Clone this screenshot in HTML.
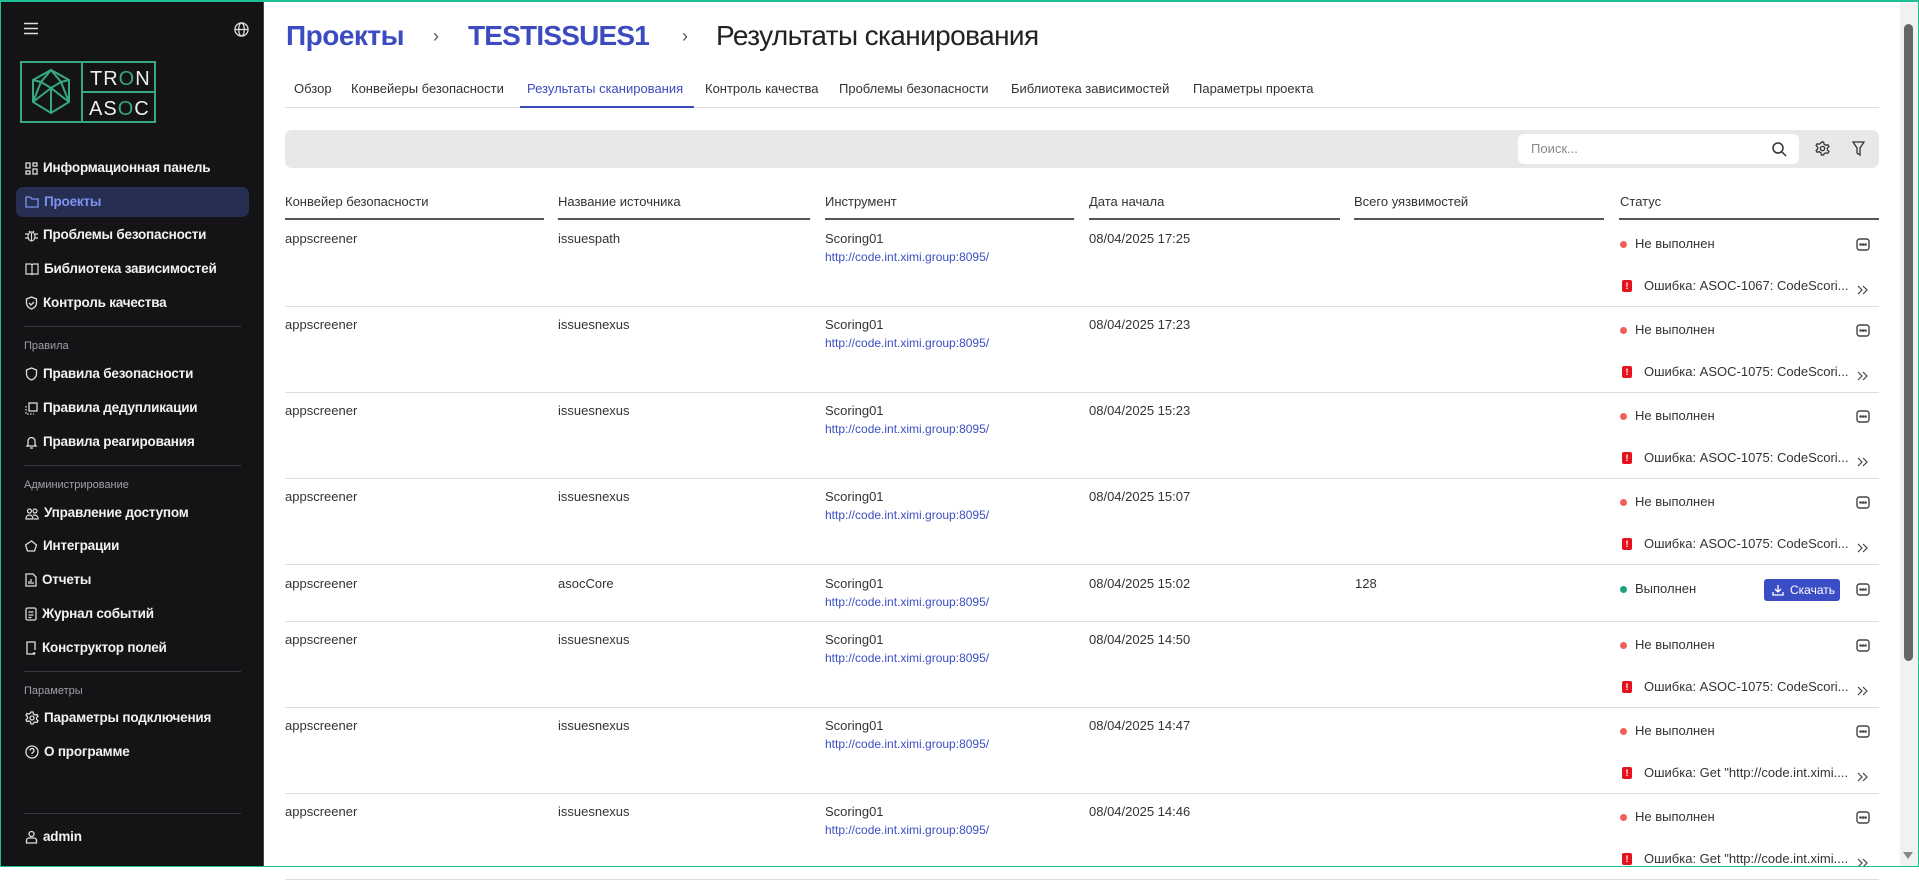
<!DOCTYPE html>
<html><head><meta charset="utf-8">
<style>
*{box-sizing:border-box;margin:0;padding:0}
html,body{width:1919px;height:867px;overflow:hidden;background:#fff;font-family:"Liberation Sans",sans-serif;}
#frame{position:absolute;left:0;top:0;width:1919px;height:867px;border:1px solid #1fbf96;border-top-width:2px;pointer-events:none;z-index:10}
#side{position:absolute;left:0;top:0;width:264px;height:867px;background:#141416;border-right:1px solid #444;}
.ab{position:absolute;white-space:nowrap}
.mi{position:absolute;left:25px;color:#f2f2f2;font-size:13.5px;font-weight:bold;letter-spacing:-0.2px;height:20px;line-height:20px;display:flex;align-items:center}
.mi svg{margin-right:5px;flex:none}
.lbl{position:absolute;left:24px;color:#a0a0a6;font-size:11px}
.div{position:absolute;left:24px;width:217px;height:1px;background:#3a3a3e}
.t{position:absolute;white-space:nowrap;font-size:13px;color:#333;line-height:16px}
.lnk{color:#3b4fc2;font-size:12px}
.th{position:absolute;top:194px;font-size:13px;color:#333}
.hl{position:absolute;top:218px;height:2px;background:#555}
.sep{position:absolute;left:285px;width:1594px;height:1px;background:#ddd}
.dot{position:absolute;width:7px;height:7px;border-radius:50%}
.err{position:absolute;width:10px;height:12px;background:#e5121c;border-radius:2px;color:#fff;font-size:9px;font-weight:bold;text-align:center;line-height:12px}
</style></head><body>
<div id="side">
  <svg class="ab" style="left:24px;top:22px" width="14" height="13" viewBox="0 0 14 13"><path d="M0 1.5h14M0 6.5h14M0 11.5h14" stroke="#ddd" stroke-width="1.6"/></svg>
  <svg class="ab" style="left:234px;top:22px" width="15" height="15" viewBox="0 0 16 16" fill="none" stroke="#ddd" stroke-width="1.4"><circle cx="8" cy="8" r="7"/><ellipse cx="8" cy="8" rx="3" ry="7"/><path d="M1 8h14"/></svg>
  <svg class="ab" style="left:20px;top:61px" width="137" height="63" viewBox="0 0 137 63">
    <g fill="none" stroke="#36a884" stroke-width="2">
      <rect x="1" y="1" width="134" height="60"/><path d="M62 1v60M62 31h73"/>
      <path d="M31 9l18 10v22l-18 11l-18-11V19z"/>
      <path d="M31 9l-10 12l10 6l10-6z M13 19l8 2M49 19l-8 2M31 27v25M13 41l18-14l18 14M21 21l-8 20M41 21l8 20"/>
    </g>
    <text x="70" y="24" font-family="Liberation Sans" font-size="20" fill="#eee" letter-spacing="1">TR<tspan fill="#36a884">O</tspan>N</text>
    <text x="69" y="54" font-family="Liberation Sans" font-size="20" fill="#eee" letter-spacing="1">AS<tspan fill="#36a884">O</tspan>C</text>
  </svg>
  <div class="ab" style="left:16px;top:187px;width:233px;height:30px;background:#262e52;border-radius:7px"></div>
  <div class="mi" style="top:158px"><svg width="13" height="13" viewBox="0 0 13 13" fill="none" stroke="#ddd" stroke-width="1.3"><rect x="1" y="1" width="4" height="5"/><rect x="8" y="1" width="4" height="3"/><rect x="1" y="9" width="4" height="3"/><rect x="8" y="7" width="4" height="5"/></svg>Информационная панель</div>
  <div class="mi" style="top:192px;color:#7d93f0"><svg width="14" height="12" viewBox="0 0 14 12" fill="none" stroke="#7d93f0" stroke-width="1.3"><path d="M1 1h4l2 2h6v8H1z"/></svg>Проекты</div>
  <div class="mi" style="top:225px"><svg width="13" height="13" viewBox="0 0 13 13" fill="none" stroke="#ddd" stroke-width="1.2"><ellipse cx="6.5" cy="7.5" rx="3.5" ry="4.5"/><path d="M0 5h3M10 5h3M0 9h3M10 9h3M4 2l1 1M9 2l-1 1M6.5 4v8"/></svg>Проблемы безопасности</div>
  <div class="mi" style="top:259px"><svg width="14" height="12" viewBox="0 0 14 12" fill="none" stroke="#ddd" stroke-width="1.2"><path d="M1 1h5l1 1l1-1h5v10H8l-1 1l-1-1H1zM7 2v9"/></svg>Библиотека зависимостей</div>
  <div class="mi" style="top:293px"><svg width="13" height="14" viewBox="0 0 13 14" fill="none" stroke="#ddd" stroke-width="1.3"><path d="M6.5 1l5 2v4c0 3-2.5 5-5 6c-2.5-1-5-3-5-6V3z M4 7l2 2l3-3"/></svg>Контроль качества</div>
  <div class="div" style="top:326px"></div>
  <div class="lbl" style="top:340px">Правила</div>
  <div class="mi" style="top:364px"><svg width="13" height="14" viewBox="0 0 13 14" fill="none" stroke="#ddd" stroke-width="1.3"><path d="M6.5 1l5 2v4c0 3-2.5 5-5 6c-2.5-1-5-3-5-6V3z"/></svg>Правила безопасности</div>
  <div class="mi" style="top:398px"><svg width="13" height="13" viewBox="0 0 13 13" fill="none" stroke="#ddd" stroke-width="1.3"><rect x="4" y="1" width="8" height="8"/><path d="M1 4v8h8" stroke-dasharray="1.5 1.5"/></svg>Правила дедупликации</div>
  <div class="mi" style="top:432px"><svg width="13" height="14" viewBox="0 0 13 14" fill="none" stroke="#ddd" stroke-width="1.3"><path d="M3 10V6a3.5 3.5 0 0 1 7 0v4l1 1H2zM5 13h3"/></svg>Правила реагирования</div>
  <div class="div" style="top:465px"></div>
  <div class="lbl" style="top:479px">Администрирование</div>
  <div class="mi" style="top:503px"><svg width="14" height="13" viewBox="0 0 14 13" fill="none" stroke="#ddd" stroke-width="1.2"><circle cx="4.5" cy="4" r="2"/><circle cx="10" cy="4" r="2"/><path d="M1 12c0-3 2-4 3.5-4s3.5 1 3.5 4zM8 8c2 0 5 0 5 4H9"/></svg>Управление доступом</div>
  <div class="mi" style="top:536px"><svg width="13" height="13" viewBox="0 0 13 13" fill="none" stroke="#ddd" stroke-width="1.3"><path d="M6.5 1l5 4l-2 6h-7l-2-6z"/></svg>Интеграции</div>
  <div class="mi" style="top:570px"><svg width="12" height="14" viewBox="0 0 12 14" fill="none" stroke="#ddd" stroke-width="1.3"><path d="M1 1h7l3 3v9H1zM4 11V8M6 11V6M8 11V9"/></svg>Отчеты</div>
  <div class="mi" style="top:604px"><svg width="12" height="14" viewBox="0 0 12 14" fill="none" stroke="#ddd" stroke-width="1.3"><rect x="1" y="1" width="10" height="12" rx="1.5"/><path d="M3.5 5h5M3.5 8h5M3.5 10.5h3"/></svg>Журнал событий</div>
  <div class="mi" style="top:638px"><svg width="12" height="14" viewBox="0 0 12 14" fill="none" stroke="#ddd" stroke-width="1.3"><path d="M8 13H2V1h8v8M9 11v3M7.5 12.5h3"/></svg>Конструктор полей</div>
  <div class="div" style="top:671px"></div>
  <div class="lbl" style="top:685px">Параметры</div>
  <div class="mi" style="top:708px"><svg width="14" height="14" viewBox="0 0 14 14" fill="none" stroke="#ddd" stroke-width="1.3"><circle cx="7" cy="7" r="2"/><path d="M6 1h2l.5 2l1.5 1l2-.5l1 1.7l-1.5 1.5v1.6l1.5 1.5l-1 1.7l-2-.5l-1.5 1L8 13H6l-.5-2L4 10l-2 .5l-1-1.7l1.5-1.5V5.7L1 4.2l1-1.7l2 .5l1.5-1z"/></svg>Параметры подключения</div>
  <div class="mi" style="top:742px"><svg width="14" height="14" viewBox="0 0 14 14" fill="none" stroke="#ddd" stroke-width="1.3"><circle cx="7" cy="7" r="6"/><path d="M5 5.5a2 2 0 1 1 2.5 2c-.5.2-.5.6-.5 1.5M7 10.5v.5"/></svg>О программе</div>
  <div class="div" style="top:813px"></div>
  <div class="mi" style="top:827px"><svg width="13" height="14" viewBox="0 0 13 14" fill="none" stroke="#ddd" stroke-width="1.3"><circle cx="6.5" cy="4" r="2.5"/><path d="M1.5 13v-2.5c0-1.5 1-2.5 2.5-2.5h5c1.5 0 2.5 1 2.5 2.5V13z"/></svg>admin</div>
</div>

<!-- header -->
<div class="ab" style="left:286px;top:20px;font-size:28px;color:#3c4bbf;font-weight:bold;letter-spacing:-0.5px">Проекты</div>
<div class="ab" style="left:433px;top:26px;font-size:18px;color:#555">›</div>
<div class="ab" style="left:468px;top:20px;font-size:28px;color:#3c4bbf;font-weight:bold;letter-spacing:-0.8px">TESTISSUES1</div>
<div class="ab" style="left:682px;top:26px;font-size:18px;color:#555">›</div>
<div class="ab" style="left:716px;top:20px;font-size:28px;color:#222;letter-spacing:-0.6px">Результаты сканирования</div>

<div class="ab" style="top:81px;left:294px;font-size:13px;color:#333">Обзор</div>
<div class="ab" style="top:81px;left:351px;font-size:13px;color:#333">Конвейеры безопасности</div>
<div class="ab" style="top:81px;left:527px;font-size:13px;color:#3c4bbf">Результаты сканирования</div>
<div class="ab" style="top:81px;left:705px;font-size:13px;color:#333">Контроль качества</div>
<div class="ab" style="top:81px;left:839px;font-size:13px;color:#333">Проблемы безопасности</div>
<div class="ab" style="top:81px;left:1011px;font-size:13px;color:#333">Библиотека зависимостей</div>
<div class="ab" style="top:81px;left:1193px;font-size:13px;color:#333">Параметры проекта</div>
<div class="ab" style="left:285px;top:107px;width:1594px;height:1px;background:#e0e0e0"></div>
<div class="ab" style="left:520px;top:106px;width:174px;height:2px;background:#3c4bbf"></div>

<div class="ab" style="left:285px;top:130px;width:1594px;height:38px;background:#e8e8e8;border-radius:7px"></div>
<div class="ab" style="left:1518px;top:134px;width:281px;height:30px;background:#fff;border-radius:6px"></div>
<div class="ab" style="left:1531px;top:141px;font-size:13px;color:#888">Поиск...</div>
<svg class="ab" style="left:1772px;top:142px" width="15" height="15" viewBox="0 0 15 15" fill="none" stroke="#333" stroke-width="1.5"><circle cx="6" cy="6" r="5"/><path d="M10 10l4 4"/></svg>
<svg class="ab" style="left:1815px;top:141px" width="15" height="15" viewBox="0 0 14 14" fill="none" stroke="#333" stroke-width="1.2"><circle cx="7" cy="7" r="2"/><path d="M6 1h2l.5 2l1.5 1l2-.5l1 1.7l-1.5 1.5v1.6l1.5 1.5l-1 1.7l-2-.5l-1.5 1L8 13H6l-.5-2L4 10l-2 .5l-1-1.7l1.5-1.5V5.7L1 4.2l1-1.7l2 .5l1.5-1z"/></svg>
<svg class="ab" style="left:1852px;top:141px" width="13" height="15" viewBox="0 0 13 15" fill="none" stroke="#333" stroke-width="1.3"><path d="M1 1h11L8 7v7l-3-2V7z"/></svg>

<div class="th" style="left:285px">Конвейер безопасности</div>
<div class="th" style="left:558px">Название источника</div>
<div class="th" style="left:825px">Инструмент</div>
<div class="th" style="left:1089px">Дата начала</div>
<div class="th" style="left:1354px">Всего уязвимостей</div>
<div class="th" style="left:1620px">Статус</div>
<div class="hl" style="left:285px;width:259px"></div>
<div class="hl" style="left:558px;width:252px"></div>
<div class="hl" style="left:825px;width:249px"></div>
<div class="hl" style="left:1089px;width:251px"></div>
<div class="hl" style="left:1354px;width:250px"></div>
<div class="hl" style="left:1619px;width:260px"></div>

<div id="rows"></div>
<script>
var rows=[["issuespath","17:25","ASOC-1067: CodeScori..."],["issuesnexus","17:23","ASOC-1075: CodeScori..."],["issuesnexus","15:23","ASOC-1075: CodeScori..."],["issuesnexus","15:07","ASOC-1075: CodeScori..."],["asocCore","15:02",null],["issuesnexus","14:50","ASOC-1075: CodeScori..."],["issuesnexus","14:47","Get \"http://code.int.ximi...."],["issuesnexus","14:46","Get \"http://code.int.ximi...."]];
var tops=[220,306,392,478,565,621,707,793],h="";
var more='<svg width="14" height="13" viewBox="0 0 14 13" fill="none" stroke="#444" stroke-width="1.4"><rect x="1" y="1" width="12" height="11" rx="2.5"/><circle cx="4.5" cy="6.5" r=".6" fill="#444"/><circle cx="7" cy="6.5" r=".6" fill="#444"/><circle cx="9.5" cy="6.5" r=".6" fill="#444"/></svg>';
var chev='<svg width="12" height="10" viewBox="0 0 12 10" fill="none" stroke="#444" stroke-width="1.2"><path d="M1 1l4 4l-4 4M6 1l4 4l-4 4"/></svg>';
rows.forEach(function(r,i){var t=tops[i];
h+='<div class="t" style="left:285px;top:'+(t+11)+'px">appscreener</div>';
h+='<div class="t" style="left:558px;top:'+(t+11)+'px">'+r[0]+'</div>';
h+='<div class="t" style="left:825px;top:'+(t+11)+'px">Scoring01</div>';
h+='<div class="t lnk" style="left:825px;top:'+(t+29)+'px">http://code.int.ximi.group:8095/</div>';
h+='<div class="t" style="left:1089px;top:'+(t+11)+'px">08/04/2025 '+r[1]+'</div>';
h+='<div class="ab" style="left:1856px;top:'+(t+18)+'px">'+more+'</div>';
if(r[2]){
h+='<div class="dot" style="left:1620px;top:'+(t+21)+'px;background:#f0605a"></div>';
h+='<div class="t" style="left:1635px;top:'+(t+16)+'px">Не выполнен</div>';
h+='<div class="err" style="left:1622px;top:'+(t+60)+'px">!</div>';
h+='<div class="t" style="left:1644px;top:'+(t+58)+'px">Ошибка: '+r[2].replace(/"/g,'&quot;')+'</div>';
h+='<div class="ab" style="left:1857px;top:'+(t+62)+'px">'+chev+'</div>';
h+='<div class="sep" style="top:'+(t+86)+'px"></div>';
}else{
h+='<div class="t" style="left:1355px;top:'+(t+11)+'px">128</div>';
h+='<div class="dot" style="left:1620px;top:'+(t+21)+'px;background:#1fa07c"></div>';
h+='<div class="t" style="left:1635px;top:'+(t+16)+'px">Выполнен</div>';
h+='<div class="ab" style="left:1764px;top:'+(t+14)+'px;width:76px;height:22px;background:#3a4dc4;border-radius:3px;color:#fff;font-size:12px;line-height:22px;padding-left:26px">Скачать</div>';
h+='<svg class="ab" style="left:1772px;top:'+(t+19)+'px" width="12" height="12" viewBox="0 0 12 12" fill="none" stroke="#fff" stroke-width="1.3"><path d="M6 1v7M3 5l3 3l3-3M1 8v3h10V8"/></svg>';
h+='<div class="sep" style="top:'+(t+56)+'px"></div>';
}});
document.getElementById('rows').innerHTML=h;
</script>
<div class="ab" style="left:1900px;top:0;width:19px;height:867px;background:#f1f1f1"></div>
<div class="ab" style="left:1904px;top:24px;width:9px;height:637px;background:#666;border-radius:5px"></div>
<div class="ab" style="left:1903px;top:852px;width:0;height:0;border-left:5px solid transparent;border-right:5px solid transparent;border-top:7px solid #888"></div>
<div id="frame"></div>
</body></html>
